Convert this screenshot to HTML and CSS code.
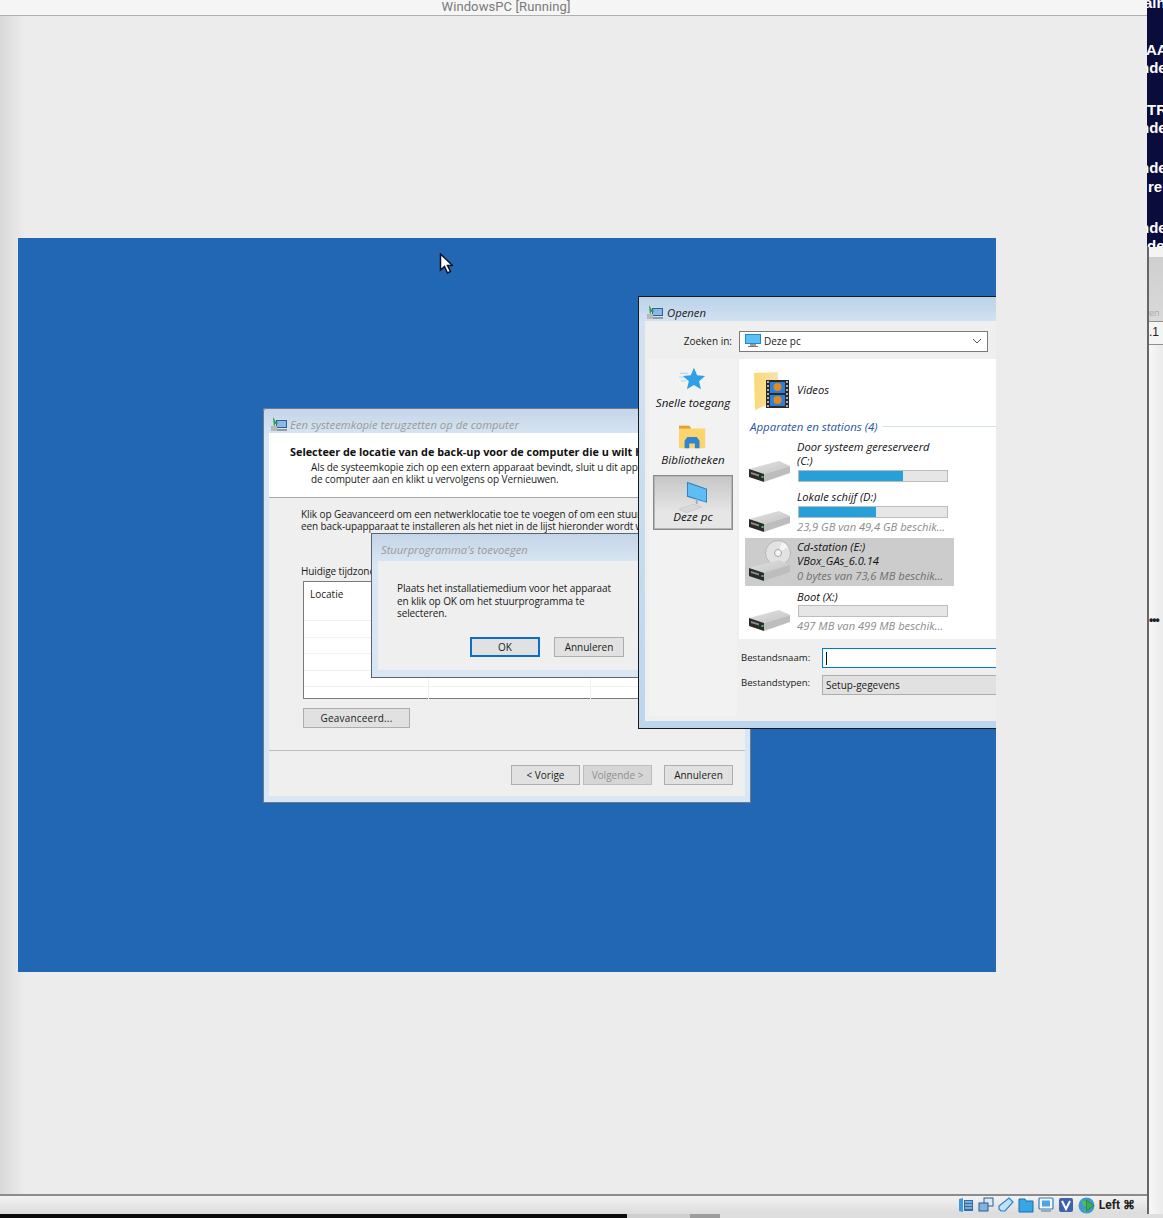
FILE: index.html
```html
<!DOCTYPE html>
<html lang="nl">
<head>
<meta charset="utf-8">
<title>WindowsPC [Running]</title>
<link rel="stylesheet" href="styles.css">
</head>
<body>
<svg class="defs" width="0" height="0" aria-hidden="true">
  <defs>
    <linearGradient id="hddtop" x1="0" y1="0" x2="1" y2="1"><stop offset="0" stop-color="#e4e4e4"/><stop offset="1" stop-color="#c2c2c2"/></linearGradient>
    <linearGradient id="folderg" x1="0" y1="0" x2="1" y2="0"><stop offset="0" stop-color="#fbd873"/><stop offset="1" stop-color="#f6e3ae"/></linearGradient>
    <symbol id="hdd" viewBox="0 0 42 22">
      <path d="M0 8 30 0l11 5-26 8z" fill="url(#hddtop)"/>
      <path d="M15 13 41 5v7L15 21z" fill="#bdbdbd"/>
      <path d="M0 8l15 5v8L0 16z" fill="#2b2b2b"/>
      <path d="M2 11l8 2.500v2L2 13z" fill="#8d8d8d"/>
      <rect x="12.500" y="15" width="2" height="2" fill="#3fd060"/>
    </symbol>
    <symbol id="vmapp" viewBox="0 0 18 15">
      <rect x="6" y="3" width="11" height="8" fill="#2b5fa8"/>
      <rect x="7" y="4" width="9" height="6" fill="#8fb8e0"/>
      <path d="M3 0l3 5 3 1-4 1-1 4z" fill="#2f9e45"/>
      <rect x="1" y="9" width="6" height="5" fill="#b9b9b9"/>
      <rect x="7" y="12" width="10" height="2" fill="#9a9a9a"/>
    </symbol>
  </defs>
</svg>

<div class="desktop">
  <div class="vbox">
    <header class="vbox-title">WindowsPC [Running]</header>
    <main class="vbox-body">
      <section class="guest">

        <article class="win win-restore">
          <div class="win-title win-title-restore">
            <svg class="win-icon"><use href="#vmapp"/></svg>
            <span class="win-title-text">Een systeemkopie terugzetten op de computer</span>
          </div>
          <div class="win-client">
            <div class="restore-head">
              <h1 class="restore-h">Selecteer de locatie van de back-up voor de computer die u wilt herstellen</h1>
              <p class="restore-sub">Als de systeemkopie zich op een extern apparaat bevindt, sluit u dit apparaat aan op<br>de computer aan en klikt u vervolgens op Vernieuwen.</p>
            </div>
            <div class="restore-body">
              <p class="restore-p">Klik op Geavanceerd om een netwerklocatie toe te voegen of om een stuurprogramma voor<br>een back-upapparaat te installeren als het niet in de lijst hieronder wordt weergegeven.</p>
              <p class="restore-tz">Huidige tijdzone</p>
              <div class="table">
                <div class="table-head">Locatie</div>
                <div class="table-row"></div>
                <div class="table-row"></div>
                <div class="table-row"></div>
                <div class="table-row"></div>
                <div class="table-last"><span></span><span></span></div>
              </div>
              <button class="btn btn-adv">Geavanceerd...</button>
            </div>
            <div class="restore-foot">
              <button class="btn btn-nav">&lt; Vorige</button>
              <button class="btn btn-nav btn-disabled">Volgende &gt;</button>
              <button class="btn btn-nav btn-cancel">Annuleren</button>
            </div>
          </div>
        </article>

        <article class="win win-driver">
          <div class="win-title win-title-driver">
            <span class="win-title-text">Stuurprogramma's toevoegen</span>
          </div>
          <div class="driver-client">
            <p class="driver-p">Plaats het installatiemedium voor het apparaat<br>en klik op OK om het stuurprogramma te<br>selecteren.</p>
            <div class="driver-btns">
              <button class="btn btn-driver btn-default">OK</button>
              <button class="btn btn-driver">Annuleren</button>
            </div>
          </div>
        </article>

        <article class="win win-open">
          <div class="win-title win-title-open">
            <svg class="win-icon"><use href="#vmapp"/></svg>
            <span class="open-title-text">Openen</span>
          </div>
          <div class="open-client">
            <div class="open-top">
              <span class="open-label">Zoeken in:</span>
              <div class="combo">
                <svg class="combo-icon" viewBox="0 0 16 14"><rect x="0" y="0" width="16" height="10" fill="#1e88d0"/><rect x="1" y="1" width="14" height="8" fill="#5cc0f2"/><rect x="5" y="10" width="6" height="2" fill="#9a9a9a"/><rect x="3" y="12" width="10" height="1" fill="#777"/></svg>
                <span class="combo-text">Deze pc</span>
                <svg class="combo-arrow" viewBox="0 0 10 6"><path d="M1 1l4 4 4-4" fill="none" stroke="#555" stroke-width="1"/></svg>
              </div>
            </div>
            <div class="open-main">
              <nav class="places">
                <div class="place place-quick">
                  <svg class="place-icon" viewBox="2 0 30 30"><path d="M18 2l3.400 8 8.600.8-6.500 5.600 2 8.600-7.500-4.600-7.500 4.600 2-8.600L6 10.800l8.600-.8z" fill="#2f9fe8"/><path d="M3 8h9M1 12h6M4 16h5" stroke="#b5d9f2" stroke-width="1.400"/></svg>
                  <span>Snelle toegang</span>
                </div>
                <div class="place place-lib">
                  <svg class="place-icon" viewBox="1 0 30 30"><path d="M1 3h11l2 3h15v21H1z" fill="#fbd46c"/><path d="M1 3h11l2 3H1z" fill="#dfa23a"/><path d="M7 27v-8l3-4h10l3 4v8h-5v-5h-6v5z" fill="#2f86d0"/></svg>
                  <span>Bibliotheken</span>
                </div>
                <div class="place place-active">
                  <svg class="place-icon place-icon-pc" viewBox="0 0 30 30"><path d="M8.500 2 30 9.500v15L8.500 18z" fill="#2a7fc4"/><path d="M9.500 3.500 29 10.300v12.900L9.500 16.800z" fill="#5ebdf3"/><path d="M19 20.500v5" stroke="#a8a8a8" stroke-width="2"/><path d="M0 31l16-5 8 3-16 6z" fill="#d9d9d9" stroke="#bcbcbc" stroke-width=".6"/></svg>
                  <span>Deze pc</span>
                </div>
              </nav>
              <div class="files">
                <div class="file-folder">
                  <svg class="folder-icon" viewBox="0 0 36 40">
                    <path d="M0 3 24 2V30L1 40z" fill="url(#folderg)"/>
                    <rect x="12" y="10" width="23" height="28" fill="#2a2a2a"/>
                    <rect x="16" y="12" width="15" height="11" fill="#2f7fd6"/>
                    <rect x="16" y="25" width="15" height="11" fill="#2f7fd6"/>
                    <circle cx="23.500" cy="17" r="4" fill="#e08a22"/>
                    <circle cx="23.500" cy="30" r="4" fill="#e08a22"/>
                    <path d="M13 12h2M13 16h2M13 20h2M13 24h2M13 28h2M13 32h2M13 36h2M32 12h2M32 16h2M32 20h2M32 24h2M32 28h2M32 32h2M32 36h2" stroke="#ddd" stroke-width="1.600"/>
                  </svg>
                  <span class="file-name">Videos</span>
                </div>
                <div class="group"><span class="group-name">Apparaten en stations (4)</span><span class="group-line"></span></div>
                <div class="drive drive-c">
                  <svg class="drive-icon"><use href="#hdd"/></svg>
                  <div class="drive-info">
                    <div class="drive-name">Door systeem gereserveerd<br>(C:)</div>
                    <div class="bar"><div class="bar-fill" style="width:70%"></div></div>
                  </div>
                </div>
                <div class="drive drive-d">
                  <svg class="drive-icon"><use href="#hdd"/></svg>
                  <div class="drive-info">
                    <div class="drive-name">Lokale schijf (D:)</div>
                    <div class="bar"><div class="bar-fill" style="width:52%"></div></div>
                    <div class="drive-free">23,9 GB van 49,4 GB beschik...</div>
                  </div>
                </div>
                <div class="drive drive-e">
                  <svg class="drive-icon drive-icon-cd" viewBox="0 0 42 42">
                    <circle cx="29" cy="13" r="12.500" fill="#e2e2e2" stroke="#b5b5b5"/>
                    <path d="M29 13 33 2a12 12 0 0 1 6 5z" fill="#f5f5f5"/>
                    <circle cx="29" cy="13" r="3.500" fill="#f5f5f5" stroke="#a5a5a5"/>
                    <use href="#hdd" x="0" y="20" width="42" height="22"/>
                  </svg>
                  <div class="drive-info">
                    <div class="drive-name">Cd-station (E:)<br>VBox_GAs_6.0.14</div>
                    <div class="drive-free drive-free-sel">0 bytes van 73,6 MB beschik...</div>
                  </div>
                </div>
                <div class="drive drive-x">
                  <svg class="drive-icon"><use href="#hdd"/></svg>
                  <div class="drive-info">
                    <div class="drive-name">Boot (X:)</div>
                    <div class="bar bar-x"></div>
                    <div class="drive-free">497 MB van 499 MB beschik...</div>
                  </div>
                </div>
              </div>
            </div>
            <div class="open-fields">
              <div class="field-row">
                <span class="field-label">Bestandsnaam:</span>
                <div class="field-input"><span class="caret"></span></div>
              </div>
              <div class="field-row field-row-2">
                <span class="field-label field-label-up">Bestandstypen:</span>
                <div class="field-select">Setup-gegevens</div>
              </div>
            </div>
          </div>
        </article>

        <svg class="cursor" viewBox="0 0 14 22"><path d="M1.500 1v16l4-3.500 3 6.500 3-1.500-3-6h5z" fill="#fff" stroke="#0a1020" stroke-width="1.500"/></svg>
      </section>
    </main>
    <footer class="status">
      <svg class="st-icon" viewBox="0 0 16 16"><path d="M1 2l4-1v14l-4-1z" fill="#3b9ae0"/><rect x="6" y="3" width="9" height="11" fill="#2f6ea8"/><path d="M7 5h7M7 8h7M7 11h7" stroke="#cfe6f7"/></svg>
      <svg class="st-icon" viewBox="0 0 16 16"><rect x="6" y="1" width="9" height="8" fill="#dbe9f5" stroke="#2a5d94"/><rect x="1" y="6" width="9" height="8" fill="#7fb2dd" stroke="#2a5d94"/></svg>
      <svg class="st-icon" viewBox="0 0 16 16"><path d="M11 1l4 4-8 9H3l-2-2v-3z" fill="#bfe2f7" stroke="#2b83c8" stroke-width="1.200"/></svg>
      <svg class="st-icon" viewBox="0 0 16 16"><path d="M1 4V2h6l1 2h7v11H1z" fill="#37a6e6" stroke="#1a6fae"/></svg>
      <svg class="st-icon" viewBox="0 0 16 16"><rect x="1" y="1" width="14" height="11" rx="1" fill="#f2f7fb" stroke="#2f7dbd" stroke-width="1.200"/><rect x="4" y="3.500" width="8" height="6" fill="#4aa5e2"/><path d="M3 14h10" stroke="#7d98ae" stroke-width="1.500"/></svg>
      <svg class="st-icon" viewBox="0 0 16 16"><rect x="1" y="1" width="14" height="14" rx="2" fill="#3f62ad"/><path d="M4 4l4 8 4-8" fill="none" stroke="#fff" stroke-width="2"/></svg>
      <svg class="st-icon st-icon-globe" viewBox="0 0 16 16"><circle cx="8" cy="8" r="7.500" fill="#3b97d6"/><path d="M3 3l5 1 1 4-4 1zM4 11l4 1-1 3z" fill="#55b85b"/><path d="M8 3l7 5-7 5z" fill="#3cb043" stroke="#1f7a2a" stroke-width=".6"/></svg>
      <span class="st-key">Left ⌘</span>
    </footer>
  </div>

  <aside class="behind">
    <div class="behind-dark">
      <div class="bl bl-1">ain</div>
      <div class="bl bl-2">AAN</div>
      <div class="bl bl-3">nde</div>
      <div class="bl bl-4">TRA</div>
      <div class="bl bl-5">nde</div>
      <div class="bl bl-6">nde</div>
      <div class="bl bl-7">ren</div>
      <div class="bl bl-8">nde</div>
      <div class="bl bl-9">de</div>
    </div>
    <div class="behind-light">
      <div class="behind-top"></div>
      <div class="behind-gray">en</div>
      <div class="behind-cell">.1</div>
      <div class="behind-rest"><span class="dots">•••</span></div>
    </div>
  </aside>
  <div class="screen-edge"><span class="edge-black"></span><span class="edge-gray"></span><span class="edge-mark"></span><span class="edge-light"></span></div>
</div>
</body>
</html>
```
FILE: styles.css
```css
* { box-sizing: border-box; }
html, body { margin: 0; padding: 0; }
body { width: 1163px; height: 1218px; overflow: hidden; background: #ececec; font-family: "Open Sans", "Noto Sans", sans-serif; }
p, h1 { margin: 0; }
.defs { position: absolute; }

.desktop { position: relative; width: 1163px; height: 1218px; display: flex; overflow: hidden; }

.vbox { width: 1147px; height: 1214px; display: flex; flex-direction: column; background: #ececec; border-bottom-right-radius: 6px; }
.vbox-title { height: 16px; flex: none; background: #f5f5f5; border-bottom: 1px solid #b0b0b0; text-align: center; font: 13px/13px Roboto, "Liberation Sans", sans-serif; color: #7a7a7a; padding-right: 135px; letter-spacing: .1px; white-space: nowrap; }
.vbox-body { flex: 1; padding: 222px 0 0 18px; background: linear-gradient(90deg, #d9d9d9 0, #ececec 26px); }

.guest { position: relative; width: 978px; height: 734px; overflow: hidden; background: #2167b3; font-size: 10px; color: #1a1a1a; }

.status { height: 20px; flex: none; border-top: 2px solid #8c8c8c; background: linear-gradient(#f2f2f2, #dcdcdc); display: flex; justify-content: flex-end; align-items: center; gap: 4px; padding: 0 12px 0 0; }
.st-icon { width: 16px; height: 16px; flex: none; }
.st-icon-globe { width: 17px; height: 17px; }
.st-key { font: bold 12px/16px Roboto, "Liberation Sans", sans-serif; color: #222; }

.behind { width: 16px; height: 1218px; flex: none; display: flex; flex-direction: column; }
.behind-dark { height: 247px; flex: none; background: #0a0c3c; overflow: hidden; position: relative; }
.bl { position: absolute; color: #fff; font: bold 15px/16px "Liberation Sans", sans-serif; white-space: nowrap; }
.bl-1 { top: -5px; left: -3px; }
.bl-2 { top: 42px; left: -1px; }
.bl-3 { top: 60px; left: -7px; }
.bl-4 { top: 102px; left: 0; }
.bl-5 { top: 120px; left: -7px; }
.bl-6 { top: 160px; left: -7px; }
.bl-7 { top: 179px; left: 1px; }
.bl-8 { top: 220px; left: -7px; }
.bl-9 { top: 238px; left: 0; }
.behind-light { flex: 1; display: flex; flex-direction: column; border-left: 2px solid #666; }
.behind-top { height: 10px; background: #f4f4f4; flex: none; }
.behind-gray { height: 65px; flex: none; background: linear-gradient(#cfcfcf, #d9d9d9); border-bottom: 1px solid #8f8f8f; color: #aaa; font-size: 9px; line-height: 11px; padding-top: 50px; }
.behind-cell { height: 23px; flex: none; background: #f4f4f4; border-bottom: 1px solid #8f8f8f; font: 12px/20px "Liberation Sans", sans-serif; color: #222; }
.behind-rest { flex: 1; background: linear-gradient(90deg, #f7f7f7, #ebebeb); padding-top: 269px; overflow: hidden; }
.dots { display: block; font: bold 12px/12px "Liberation Sans", sans-serif; color: #222; letter-spacing: -1px; white-space: nowrap; }

.screen-edge { position: absolute; left: 0; right: 0; bottom: 0; height: 4px; display: flex; }
.edge-black { width: 627px; background: #0a0a0a; }
.edge-gray { width: 63px; background: #cfcfcf; }
.edge-mark { width: 30px; background: #9c9c9c; }
.edge-light { flex: 1; background: #dedede; }

.win { position: absolute; display: flex; flex-direction: column; }
.win-title { height: 25px; flex: none; display: flex; align-items: center; padding-left: 7px; gap: 2px; }
.win-title-restore { padding-top: 8px; }
.win-icon { width: 18px; height: 15px; flex: none; }
.win-title-text { font-style: italic; font-size: 11.300px; color: #9a9a9a; white-space: nowrap; }

.win-restore { left: 245px; top: 170px; width: 488px; height: 395px; background: linear-gradient(#c4d5e8, #d9e6f3 30px); border-radius: 3px 3px 0 0; box-shadow: inset 0 0 0 1px #6d7a88; }
.win-client { flex: 1; margin: 0 6px 7px; background: #efefef; display: flex; flex-direction: column; }
.restore-head { height: 65px; flex: none; background: #fff; border-bottom: 1px solid #a8a8a8; padding: 12px 0 0 21px; overflow: hidden; }
.restore-h { font-size: 10.850px; line-height: 14px; font-weight: 700; white-space: nowrap; color: #111; }
.restore-sub { line-height: 12px; padding-left: 21px; white-space: nowrap; margin-top: 2px; letter-spacing: -.1px; }
.restore-body { flex: 1; padding: 10px 0 0 32px; border-bottom: 1px solid #bdbdbd; }
.restore-p { line-height: 12px; white-space: nowrap; letter-spacing: -.1px; }
.restore-tz { line-height: 13px; margin-top: 33px; letter-spacing: -.1px; }
.table { width: 420px; height: 118px; margin: 3px 0 9px 2px; background: #fff; border: 1px solid #7a7a7a; }
.table-head { height: 39px; padding: 6px 0 0 6px; line-height: 13px; border-bottom: 1px solid #f2f2f2; }
.table-row { height: 16.500px; border-bottom: 1px solid #f2f2f2; }
.table-last { height: 11px; display: flex; padding-left: 124px; }
.table-last span { display: block; flex: none; width: 162px; height: 20px; margin-top: -8px; border-left: 1px solid #f0f0f0; }
.btn { display: block; padding: 0; margin: 0; font: inherit; color: #1a1a1a; background: #e1e1e1; border: 1px solid #adadad; }
.btn-adv { width: 107px; height: 20px; margin-left: 2px; letter-spacing: .2px; }
.restore-foot { height: 45px; flex: none; display: flex; align-items: flex-start; padding: 14px 12px 0 0; justify-content: flex-end; gap: 3px; }
.btn-nav { width: 69px; height: 20px; }
.btn-disabled { color: #8f8f8f; background: #d6d6d6; border-color: #bdbdbd; }
.btn-cancel { margin-left: 9px; }

.win-driver { left: 353px; top: 295px; width: 300px; height: 145px; background: linear-gradient(#c4d5e8, #d9e6f3 30px); border: 1px solid #5b6470; }
.win-title-driver { height: 27px; padding: 4px 0 0 9px; }
.win-title-driver .win-title-text { font-size: 11.200px; }
.driver-client { flex: 1; margin: 0 6px 7px; background: #efefef; padding: 21px 0 0 19px; }
.driver-p { line-height: 12.500px; white-space: nowrap; letter-spacing: -.1px; }
.driver-btns { display: flex; gap: 14px; margin-top: 17px; padding-left: 73px; }
.btn-driver { width: 70px; height: 20px; }
.btn-default { border: 2px solid #0a6fc9; }

.win-open { left: 620px; top: 58px; width: 400px; height: 433px; background: linear-gradient(#bcd2e8, #d2e2f2 25px, #bcd6ee); border: 1px solid #1a1a1a; border-right: 0; }
.win-title-open { height: 24px; padding: 7px 0 0 7px; gap: 3px; }
.open-title-text { font-style: italic; font-size: 11.300px; color: #222; }
.open-client { flex: 1; margin: 0 6px 7px; background: #efefef; display: flex; flex-direction: column; }
.open-top { height: 38px; flex: none; display: flex; align-items: center; padding-top: 2px; }
.open-label { width: 87px; flex: none; text-align: right; font-size: 10px; }
.combo { width: 249px; height: 21px; margin-left: 7px; background: #fff; border: 1px solid #7a7a7a; display: flex; align-items: center; padding: 0 5px; }
.combo-icon { width: 16px; height: 14px; flex: none; }
.combo-text { margin-left: 3px; flex: 1; }
.combo-arrow { width: 10px; height: 6px; flex: none; }
.open-main { height: 280px; flex: none; display: flex; }
.places { width: 88px; height: 357px; flex: none; margin-left: 4px; background: #f2f2f2; display: flex; flex-direction: column; align-items: center; padding-top: 7px; font-style: italic; font-size: 11.600px; color: #111; }
.place { display: flex; flex-direction: column; align-items: center; width: 80px; white-space: nowrap; line-height: 14px; gap: 2px; }
.place-quick { height: 56px; }
.place-lib { height: 53px; padding-top: 1px; }
.place-icon { width: 28px; height: 28px; flex: none; }
.place-icon-pc { overflow: visible; }
.place-active { height: 55px; background: linear-gradient(#c6c6c6, #e6e6e6 70%); border: 1px solid #8a8a8a; box-shadow: inset 0 0 0 1px #b5b5b5; padding-top: 4px; }
.files { width: 300px; margin-left: 2px; background: #fff; flex: none; overflow: hidden; font-style: italic; font-size: 11.150px; color: #111; }
.file-folder { height: 59px; display: flex; align-items: center; padding: 2px 0 0 15px; }
.folder-icon { width: 36px; height: 40px; flex: none; }
.file-name { margin-left: 7px; }
.group { height: 17px; display: flex; align-items: center; padding-left: 11px; color: #2a55a5; font-size: 11.500px; }
.group-name { white-space: nowrap; }
.group-line { flex: 1; height: 1px; background: #cfe0f2; margin-left: 5px; }
.drive { display: flex; width: 209px; margin-left: 6px; padding-right: 4px; }
.drive-icon { width: 42px; height: 22px; flex: none; align-self: flex-end; margin-left: 4px; }
.drive-icon-cd { height: 42px; margin-bottom: 4px; }
.drive-info { margin-left: 6px; flex: 1; white-space: nowrap; min-width: 0; }
.drive-name { line-height: 14px; }
.bar { width: 150px; height: 12px; margin: 2px 0 0 1px; background: #e6e6e6; border: 1px solid #bcbcbc; }
.bar-fill { height: 100%; background: #26a0da; }
.bar-x { margin-top: 1px; }
.drive-free { color: #8c8c8c; line-height: 15px; margin-top: 1px; }
.drive-free-sel { color: #6f6f6f; margin-top: 0; }
.drive-c { height: 50px; padding-top: 5px; }
.drive-c .drive-icon { margin-bottom: 2px; }
.drive-d { height: 53px; padding-top: 5px; }
.drive-d .drive-icon { margin-bottom: 5px; }
.drive-e { height: 48px; background: #cccccc; padding-top: 2px; }
.drive-x { height: 53px; padding-top: 4px; }
.drive-x .drive-icon { margin-bottom: 7px; }
.open-fields { flex: none; padding: 9px 0 0 96px; position: relative; }
.field-row { display: flex; align-items: center; }
.field-row-2 { margin-top: 7px; }
.field-label { width: 81px; flex: none; font-size: 9.600px; white-space: nowrap; padding-bottom: 2px; }
.field-label-up { padding-bottom: 6px; }
.field-input { flex: 1; height: 20px; background: #fff; border: 1px solid #0078d7; border-right: 0; display: flex; align-items: center; padding-left: 3px; }
.caret { width: 1px; height: 13px; background: #111; }
.field-select { flex: 1; height: 20px; background: #e1e1e1; border: 1px solid #adadad; border-right: 0; line-height: 19px; padding-left: 3px; }

.cursor { position: absolute; left: 421px; top: 15px; width: 14px; height: 22px; }
```
